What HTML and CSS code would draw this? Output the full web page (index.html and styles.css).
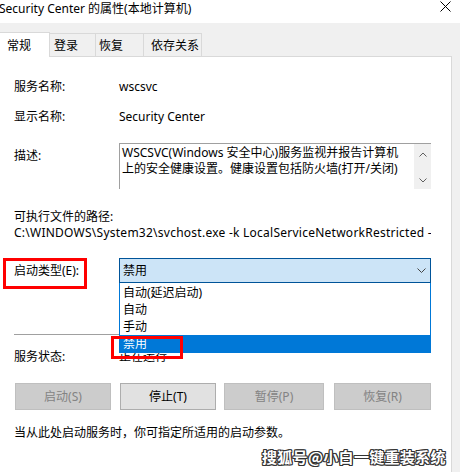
FILE: index.html
```html
<!DOCTYPE html>
<html lang="zh-CN">
<head>
<meta charset="utf-8">
<title>Security Center 的属性(本地计算机)</title>
<link rel="stylesheet" href="styles.css">
</head>
<body>
<div class="titlebar">
  <span class="title">Security Center 的属性(本地计算机)</span>
  <svg class="close" viewBox="0 0 11 11"><path d="M0.5 0.5 L10.5 10.5 M10.5 0.5 L0.5 10.5" stroke="#000" stroke-width="1" fill="none"/></svg>
</div>
<div class="tabs">
  <div class="tab tab-active">常规</div>
  <div class="tab tab-login">登录</div>
  <div class="tab tab-recover">恢复</div>
  <div class="tab tab-deps">依存关系</div>
</div>
<div class="panel">
  <div class="row row-name"><span class="label">服务名称:</span><span class="value">wscsvc</span></div>
  <div class="row row-display"><span class="label">显示名称:</span><span class="value">Security Center</span></div>
  <div class="row row-desc">
    <span class="label label-desc">描述:</span>
    <div class="textbox">
      <div class="textbox-text">WSCSVC(Windows 安全中心)服务监视并报告计算机<br>上的安全健康设置。健康设置包括防火墙(打开/关闭)</div>
      <div class="scrollbar">
        <svg class="arrow" viewBox="0 0 8 5"><polyline points="0.5,4.5 4,1 7.5,4.5" fill="none" stroke="#606060" stroke-width="1"/></svg>
        <svg class="arrow" viewBox="0 0 8 5"><polyline points="0.5,0.5 4,4 7.5,0.5" fill="none" stroke="#606060" stroke-width="1"/></svg>
      </div>
    </div>
  </div>
  <div class="row row-pathlabel">可执行文件的路径:</div>
  <div class="row row-path">C:\WINDOWS\System32\svchost.exe -k LocalServiceNetworkRestricted -p</div>
  <div class="row row-startup">
    <span class="label">启动类型(E):</span>
    <div class="select">
      <span>禁用</span>
      <svg class="chev" viewBox="0 0 9 5"><polyline points="0.5,0.5 4.5,4.5 8.5,0.5" fill="none" stroke="#444" stroke-width="1"/></svg>
    </div>
  </div>
  <div class="sep"></div>
  <div class="row row-status"><span class="label">服务状态:</span><span class="value">正在运行</span></div>
  <div class="buttons">
    <div class="btn btn-disabled btn-start">启动(S)</div>
    <div class="btn btn-stop">停止(T)</div>
    <div class="btn btn-disabled btn-pause">暂停(P)</div>
    <div class="btn btn-disabled btn-resume">恢复(R)</div>
  </div>
  <div class="row row-hint">当从此处启动服务时，你可指定所适用的启动参数。</div>
</div>

<div class="dropdown">
  <div class="opt">自动(延迟启动)</div>
  <div class="opt">自动</div>
  <div class="opt">手动</div>
  <div class="opt opt-selected">禁用</div>
</div>
<div class="mark mark-label"></div>
<div class="mark mark-option"></div>
<div class="watermark">搜狐号@小白一键重装系统</div>
</body>
</html>
```
FILE: styles.css
```css
* { box-sizing: border-box; }
html, body { margin: 0; padding: 0; }
body {
  width: 460px;
  height: 472px;
  overflow: hidden;
  position: relative;
  background: #f0f0f0;
  font-family: "Noto Sans", "Noto Sans CJK SC", sans-serif;
  font-size: 12px;
  color: #000;
}

.titlebar {
  height: 23px;
  background: #fff;
  display: flex;
  justify-content: space-between;
  padding-right: 9px;
}
.title { line-height: 16px; padding-top: 1px; margin-left: -1px; white-space: nowrap; }
.close { width: 11px; height: 11px; margin-top: 1px; }

.tabs {
  height: 33px;
  display: flex;
  align-items: flex-end;
  position: relative;
  z-index: 1;
}
.tab {
  height: 23px;
  border-top: 1px solid #d9d9d9;
  border-right: 1px solid #d9d9d9;
  line-height: 22px;
  white-space: nowrap;
  font-family: "Noto Sans CJK SC", sans-serif;
}
.tab-active {
  height: 25px;
  margin-bottom: -1px;
  line-height: 24px;
  background: #fff;
  width: 50px;
  padding-left: 7px;
}
.tab-login { width: 46px; padding-left: 4px; }
.tab-recover { width: 48px; padding-left: 3px; }
.tab-deps { width: 58px; padding-left: 7px; }

.panel {
  width: 452px;
  height: 416px;
  background: #fff;
  border-top: 1px solid #d9d9d9;
  border-right: 1px solid #d9d9d9;
  padding-left: 14px;
}

.row { display: flex; line-height: 16px; white-space: nowrap; }
.label { width: 105px; flex: none; }
.row-name { margin-top: 22px; }
.row-display { margin-top: 14px; }
.row-desc { margin-top: 18px; height: 46px; }
.label-desc { padding-top: 5px; }
.row-pathlabel { margin-top: 20px; }
.row-path { width: 417px; overflow: hidden; letter-spacing: 0.25px; }
.row-startup { margin-top: 17px; height: 25px; align-items: center; }
.row-status { margin-top: 14px; }
.row-hint { margin-top: 15px; }

.textbox {
  width: 312px;
  height: 46px;
  border-top: 1px solid #a0a0a0;
  border-left: 1px solid #a0a0a0;
  display: flex;
}
.textbox-text {
  flex: 1;
  padding: 1px 0 0 2px;
  line-height: 16px;
  overflow: hidden;
}
.scrollbar {
  width: 17px;
  flex: none;
  background: #f0f0f0;
  display: flex;
  flex-direction: column;
  justify-content: space-between;
  align-items: center;
  padding: 8px 0 6px;
}
.arrow { width: 8px; height: 5px; display: block; }

.select {
  width: 312px;
  height: 25px;
  background: #cce4f7;
  border: 1px solid #005499;
  display: flex;
  align-items: center;
  justify-content: space-between;
  padding: 0 4px 0 3px;
}
.chev { width: 9px; height: 5px; display: block; }

.sep { margin-top: 51px; width: 417px; height: 1px; background: #a0a0a0; }

.buttons { display: flex; margin-top: 18px; margin-left: 1px; }
.btn {
  height: 27px;
  width: 96px;
  line-height: 25px;
  text-align: center;
  border: 1px solid #adadad;
  background: #e1e1e1;
}
.btn-disabled { background: #cccccc; border-color: #bfbfbf; color: #838383; }
.btn-stop { margin-left: 9px; }
.btn-pause { margin-left: 8px; width: 100px; }
.btn-resume { margin-left: 10px; width: 97px; }

.dropdown {
  position: absolute;
  left: 119px;
  top: 283px;
  width: 312px;
  height: 70px;
  background: #fff;
  border: 1px solid #0078d7;
  border-top: none;
  padding-top: 1px;
}
.opt { height: 17px; line-height: 17px; padding-left: 3px; }
.opt-selected { height: 18px; line-height: 18px; background: #0078d7; color: #fff; margin: 0 -1px; padding-left: 4px; }

.mark { position: absolute; border: 3px solid #ff0000; }
.mark-label { left: 3px; top: 258px; width: 84px; height: 31px; }
.mark-option { left: 111px; top: 336px; width: 72px; height: 23px; }

.watermark {
  position: absolute;
  left: 262px;
  top: 448px;
  font-family: "Noto Sans CJK SC", sans-serif;
  font-size: 15px;
  font-weight: bold;
  line-height: 18px;
  color: #fff;
  letter-spacing: 0.3px;
  text-shadow: 1px 0 0 #333, -1px 0 0 #333, 0 1px 0 #333, 0 -1px 0 #333, 1px 1px 0 #333, -1px -1px 0 #333, 1px -1px 0 #333, -1px 1px 0 #333;
}
```
